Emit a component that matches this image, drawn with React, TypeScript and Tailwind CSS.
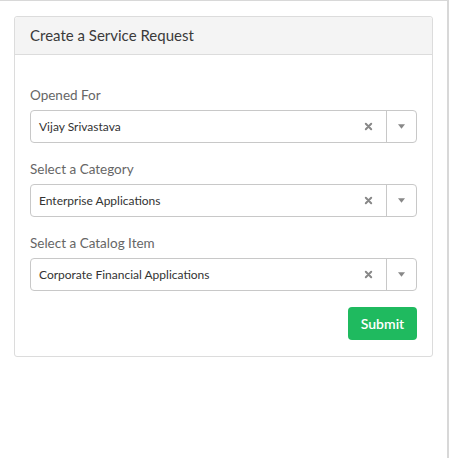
import React from 'react';

type Field = { label: string; value: string };

const fields: Field[] = [
  { label: 'Opened For', value: 'Vijay Srivastava' },
  { label: 'Select a Category', value: 'Enterprise Applications' },
  { label: 'Select a Catalog Item', value: 'Corporate Financial Applications' },
];

const SelectBox: React.FC<{ value: string }> = ({ value }) => (
  <div className="flex h-[33px] items-stretch rounded-[4px] border border-[#c8c8c8] bg-white">
    <div className="flex flex-1 items-center pl-[8px] text-[12px] text-[#333]">{value}</div>
    <div className="flex w-[30px] items-center justify-center pr-[6px]">
      <svg width="9" height="9" viewBox="0 0 10 10">
        <path d="M2 2 L8 8 M8 2 L2 8" stroke="#888" strokeWidth="2.2" strokeLinecap="round" />
      </svg>
    </div>
    <div className="flex w-[30px] items-center justify-center border-l border-[#c8c8c8]">
      <svg width="7" height="5" viewBox="0 0 8 5">
        <path d="M0 0 L8 0 L4 5 Z" fill="#888" />
      </svg>
    </div>
  </div>
);

const App: React.FC = () => {
  return (
    <div
      className="h-[458px] w-[449px] border-t border-r-2 border-[#d8d8d8] bg-white pl-[14px] pt-[15px]"
      style={{ fontFamily: 'Lato, "Noto Sans", sans-serif' }}
    >
      {/* Card */}
      <div className="w-[419px] rounded-[3px] border border-[#dcdcdc] bg-white">
        <div className="flex h-[38px] items-center rounded-t-[3px] border-b border-[#dcdcdc] bg-[#f4f4f4] px-[15px] text-[15px] text-[#3a3a3a]">
          Create a Service Request
        </div>
        <div className="px-[15px] pb-[16px] pt-[30px]">
          {fields.map((f) => (
            <div key={f.label} className="mb-[16px]">
              <div className="mb-[5px] h-[20px] text-[13.5px] leading-[20px] text-[#666]">{f.label}</div>
              <SelectBox value={f.value} />
            </div>
          ))}
          <div className="flex justify-end">
            <button className="h-[33px] w-[69px] rounded-[4px] bg-[#1fba5f] text-[14px] font-semibold text-white">
              Submit
            </button>
          </div>
        </div>
      </div>
    </div>
  );
};

export default App;
